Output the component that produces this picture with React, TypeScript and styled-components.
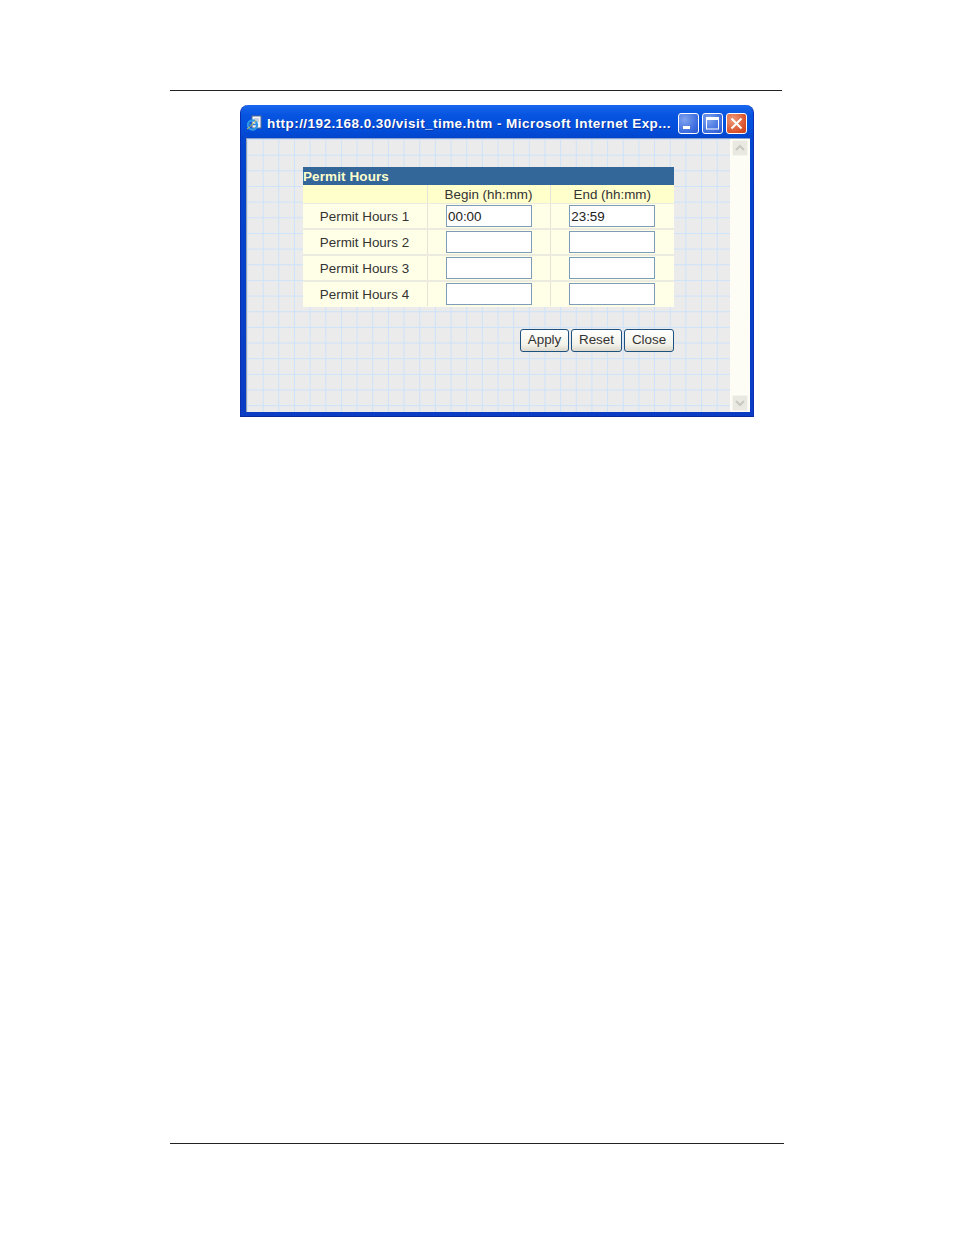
import * as React from 'react'
import styled, { createGlobalStyle } from 'styled-components'

const GlobalStyle = createGlobalStyle`
    html, body {
        margin: 0;
        padding: 0;
        background: #fff;
        font-family: "Liberation Sans", Arial, sans-serif;
    }
`

const Page = styled.div`
    width: 954px;
    height: 1235px;
    padding: 90px 0 0 170px;
    box-sizing: border-box;
`

const TopRule = styled.div`
    width: 612px;
    height: 1px;
    background: #222;
`

const BottomRule = styled.div`
    width: 614px;
    height: 1px;
    margin-top: 726px;
    background: #222;
`

const Win = styled.div`
    width: 514px;
    height: 312px;
    margin: 14px 0 0 70px;
    box-sizing: border-box;
    padding: 0 3px 4px 5px;
    display: flex;
    flex-direction: column;
    border-radius: 8px 8px 0 0;
    background: linear-gradient(180deg, #1a68ee 0, #0654e0 10px, #0350dc 22px, #0246cf 32px, #0a3cc4 100%);
    border-left: 1px solid #0a2fb0;
    border-right: 1px solid #0a2fb0;
    border-bottom: 1px solid #0a2a9c;
`

const TitleBar = styled.div`
    height: 33px;
    flex: none;
    display: flex;
    align-items: center;
    padding: 3px 3px 0 0;
    box-sizing: border-box;
`

const TitleIcon = styled.svg`
    width: 17px;
    height: 17px;
    margin-right: 4px;
    flex: none;
`

const TitleText = styled.div`
    flex: 1;
    font-size: 13.5px;
    font-weight: bold;
    letter-spacing: 0.44px;
    color: #fff;
    white-space: nowrap;
    overflow: hidden;
    text-shadow: 1px 1px 0 #0a2f9c;
`

const CaptionBtn = styled.div<{ $close?: boolean }>`
    width: 21px;
    height: 21px;
    box-sizing: border-box;
    margin-left: 3px;
    flex: none;
    border: 1px solid #fff;
    border-radius: 3px;
    display: flex;
    align-items: center;
    justify-content: center;
    background: ${p => (p.$close
        ? 'radial-gradient(circle at 30% 30%, #ee9a7a, #d9512a 70%, #c43f1c)'
        : 'radial-gradient(circle at 30% 30%, #7fa3ee, #3f6fe0 65%, #2a55cc)')};
`

const Body = styled.div`
    flex: 1;
    display: flex;
    min-height: 0;
    border-top: 1px solid #8ea2c8;
    border-left: 1px solid #9aa0a8;
`

const Canvas = styled.div`
    flex: 1;
    box-sizing: border-box;
    padding: 28px 0 0 55.5px;
    background-color: #ebebeb;
    background-image:
        linear-gradient(90deg, #cde2fa 1.3px, transparent 1.3px),
        linear-gradient(180deg, #cde2fa 1.3px, transparent 1.3px);
    background-size: 15.67px 15.67px;
    background-position: 0 0;
`

const Scrollbar = styled.div`
    width: 20px;
    flex: none;
    background: #fdfdf6;
    display: flex;
    flex-direction: column;
    justify-content: space-between;
    align-items: center;
    padding: 1px 2px 1px 2px;
    box-sizing: border-box;
`

const ScrollBtn = styled.div`
    width: 16px;
    height: 16px;
    border-radius: 2px;
    background: #e9e9e2;
    border: 1px solid #f4f4ee;
    box-sizing: border-box;
    display: flex;
    align-items: center;
    justify-content: center;
`

const Panel = styled.div`
    width: 371.5px;
    font-size: 13.4px;
    color: #333;
`

const PanelTitle = styled.div`
    height: 18px;
    line-height: 19px;
    background: #336699;
    color: #ffffcc;
    font-size: 13.5px;
    font-weight: bold;
    letter-spacing: 0.1px;
    padding-left: 0.5px;
`

const Row = styled.div<{ $head?: boolean }>`
    display: grid;
    grid-template-columns: 125px 123px 123.5px;
    height: ${p => (p.$head ? 18 : 26)}px;
    box-sizing: border-box;
    background: ${p => (p.$head ? '#ffffcc' : '#ffffe8')};
    border-top: ${p => (p.$head ? 0 : 1)}px solid #ebebe0;
    border-bottom: ${p => (p.$head ? 0 : 1)}px solid #ebebe0;
    &:last-child { border-bottom-color: transparent; }
`

const Cell = styled.div<{ $nudge?: number }>`
    display: flex;
    align-items: center;
    justify-content: center;
    padding-left: ${p => p.$nudge ?? 0}px;
    border-right: 1px solid #e4e4d8;
    white-space: nowrap;
    &:last-child { border-right: 0; }
`

const TimeInput = styled.input`
    width: 86px;
    height: 22px;
    box-sizing: border-box;
    border: 1px solid #7f9db9;
    background: #fff;
    padding: 0 1px;
    font: 13.4px "Liberation Sans", Arial, sans-serif;
    color: #222;
    outline: none;
`

const Buttons = styled.div`
    width: 371.5px;
    margin-top: 22px;
    display: flex;
    justify-content: flex-end;
    gap: 2px;
`

const Btn = styled.button<{ $w: number }>`
    width: ${p => p.$w}px;
    height: 23px;
    padding: 0 0 2px;
    box-sizing: border-box;
    border: 1px solid #1c5180;
    border-radius: 3px;
    background: linear-gradient(180deg, #ffffff, #f2f2ea 70%, #dcd8cc);
    font: 13.4px "Liberation Sans", Arial, sans-serif;
    color: #333;
`

const rows = [
    { name: 'Permit Hours 1', begin: '00:00', end: '23:59' },
    { name: 'Permit Hours 2', begin: '', end: '' },
    { name: 'Permit Hours 3', begin: '', end: '' },
    { name: 'Permit Hours 4', begin: '', end: '' },
]

export default function App() {
    return (
        <Page>
            <GlobalStyle />
            <TopRule />
            <Win>
                <TitleBar>
                    <TitleIcon viewBox="0 0 17 17">
                        <rect x="6" y="1" width="9" height="12" fill="#f4f6fb" stroke="#5a6a8c" strokeWidth="1" />
                        <path d="M8 4h5M8 6h5" stroke="#9aa8c4" strokeWidth="1" />
                        <circle cx="6.5" cy="10" r="4.6" fill="none" stroke="#2f9be8" strokeWidth="2.2" />
                        <path d="M2.5 9.5h8" stroke="#2f7fd8" strokeWidth="1.6" />
                        <path d="M1 14c2-1 7-6 9-9" stroke="#e8c24a" strokeWidth="1" fill="none" />
                    </TitleIcon>
                    <TitleText>http://192.168.0.30/visit_time.htm - Microsoft Internet Exp...</TitleText>
                    <CaptionBtn>
                        <svg width="19" height="19" viewBox="0 0 19 19">
                            <rect x="4" y="12" width="7" height="3" fill="#fff" />
                        </svg>
                    </CaptionBtn>
                    <CaptionBtn>
                        <svg width="19" height="19" viewBox="0 0 19 19">
                            <rect x="3.5" y="4" width="12" height="11" fill="none" stroke="#fff" />
                            <rect x="3" y="3" width="13" height="3" fill="#fff" />
                        </svg>
                    </CaptionBtn>
                    <CaptionBtn $close>
                        <svg width="19" height="19" viewBox="0 0 19 19">
                            <path d="M4.5 4.5l10 10M14.5 4.5l-10 10" stroke="#fff" strokeWidth="2" />
                        </svg>
                    </CaptionBtn>
                </TitleBar>
                <Body>
                    <Canvas>
                        <Panel>
                            <PanelTitle>Permit Hours</PanelTitle>
                            <Row $head>
                                <Cell />
                                <Cell>Begin (hh:mm)</Cell>
                                <Cell>End (hh:mm)</Cell>
                            </Row>
                            {rows.map(r => (
                                <Row key={r.name}>
                                    <Cell>{r.name}</Cell>
                                    <Cell $nudge={1}><TimeInput defaultValue={r.begin} /></Cell>
                                    <Cell><TimeInput defaultValue={r.end} /></Cell>
                                </Row>
                            ))}
                        </Panel>
                        <Buttons>
                            <Btn $w={49}>Apply</Btn>
                            <Btn $w={51}>Reset</Btn>
                            <Btn $w={50}>Close</Btn>
                        </Buttons>
                    </Canvas>
                    <Scrollbar>
                        <ScrollBtn>
                            <svg width="10" height="8" viewBox="0 0 10 8">
                                <path d="M1 6l4-4 4 4" fill="none" stroke="#c8c8c0" strokeWidth="2" />
                            </svg>
                        </ScrollBtn>
                        <ScrollBtn>
                            <svg width="10" height="8" viewBox="0 0 10 8">
                                <path d="M1 2l4 4 4-4" fill="none" stroke="#c8c8c0" strokeWidth="2" />
                            </svg>
                        </ScrollBtn>
                    </Scrollbar>
                </Body>
            </Win>
            <BottomRule />
        </Page>
    )
}
